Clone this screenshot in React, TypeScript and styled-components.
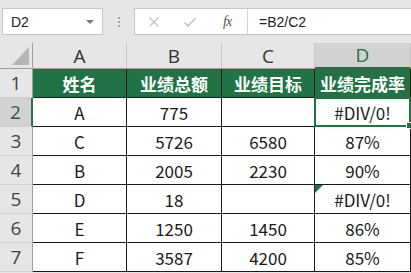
import { Fragment } from 'react';
import styled, { createGlobalStyle, css } from 'styled-components';

const GREEN = '#217346';

const GlobalStyle = createGlobalStyle`
	html, body {
		margin: 0;
		padding: 0;
		background: #fff;
		overflow: hidden;
	}
`;

const Page = styled.div`
	width: 411px;
	height: 273px;
	background: #e6e6e6;
	font-family: 'Noto Sans CJK SC', 'Noto Sans', sans-serif;
	overflow: hidden;
`;

const FormulaBar = styled.div`
	height: 43px;
	box-sizing: border-box;
	padding: 8px 0 0 2px;
	display: flex;
	align-items: flex-start;
`;

const NameBox = styled.div`
	width: 101px;
	height: 27px;
	box-sizing: border-box;
	border: 1px solid #c6c6c6;
	background: #fff;
	display: flex;
	align-items: center;
	justify-content: space-between;
	padding: 0 8px 0 8px;
	font-family: 'Liberation Sans', sans-serif;
	font-size: 14px;
	color: #222;
`;

const Caret = styled.span`
	width: 0;
	height: 0;
	border-left: 4px solid transparent;
	border-right: 4px solid transparent;
	border-top: 4px solid #777;
`;

const Grip = styled.div`
	width: 31px;
	height: 27px;
	display: flex;
	flex-direction: column;
	align-items: center;
	justify-content: center;
	gap: 2px;

	& span {
		width: 2px;
		height: 2px;
		background: #aaa;
	}
`;

const FormulaBox = styled.div`
	flex: 1;
	height: 27px;
	box-sizing: border-box;
	border: 1px solid #c6c6c6;
	border-right: none;
	background: #fff;
	display: flex;
	align-items: center;
`;

const IconZone = styled.div`
	width: 112px;
	height: 100%;
	display: flex;
	align-items: center;
	padding-left: 13px;
	box-sizing: border-box;
	gap: 23px;
`;

const Fx = styled.span`
	font-family: 'Liberation Serif', serif;
	font-style: italic;
	font-size: 14px;
	color: #555;
	margin-left: 3px;
	letter-spacing: -1px;
`;

const FormulaText = styled.div`
	height: 100%;
	border-left: 1px solid #d4d4d4;
	display: flex;
	align-items: center;
	padding-left: 11px;
	font-family: 'Liberation Sans', sans-serif;
	font-size: 14px;
	color: #222;
	flex: 1;
`;

const Sheet = styled.div`
	display: grid;
	grid-template-columns: 33px 94px 95px 93px 96px;
	grid-template-rows: 26px repeat(7, 29px);
`;

const Corner = styled.div`
	border-right: 1px solid #9e9e9e;
	border-bottom: 1px solid #9e9e9e;
	box-sizing: border-box;
	display: flex;
	align-items: flex-end;
	justify-content: flex-end;
	padding: 0 3px 3px 0;

	&::after {
		content: '';
		width: 17px;
		height: 18px;
		background: #b5b5b5;
		clip-path: polygon(100% 0, 100% 100%, 0 100%);
	}
`;

const ColHead = styled.div<{ $active?: boolean }>`
	box-sizing: border-box;
	border-right: 1px solid #c6c6c6;
	border-bottom: 1px solid #9e9e9e;
	display: flex;
	align-items: flex-end;
	justify-content: center;
	font-family: 'Open Sans', sans-serif;
	font-size: 19px;
	line-height: 24px;
	color: #333;
	${({ $active }) =>
		$active &&
		css`
			background: #d2d2d2;
			border-bottom: 2px solid ${GREEN};
			color: ${GREEN};
		`}
`;

const RowHead = styled.div<{ $active?: boolean }>`
	box-sizing: border-box;
	border-right: 1px solid #9e9e9e;
	border-bottom: 1px solid #d0d0d0;
	display: flex;
	align-items: flex-end;
	justify-content: center;
	font-family: 'Open Sans', sans-serif;
	font-size: 19px;
	line-height: 27px;
	color: #444;
	${({ $active }) =>
		$active &&
		css`
			background: #d2d2d2;
			border-right: 2px solid ${GREEN};
			color: #2f5b45;
		`}
`;

const Cell = styled.div<{ $head?: boolean; $selected?: boolean; $flag?: boolean }>`
	position: relative;
	box-sizing: border-box;
	background: #fff;
	border-right: 1px solid #1a1a1a;
	border-bottom: 1px solid #1a1a1a;
	display: flex;
	align-items: center;
	justify-content: center;
	font-size: 17px;
	color: #1a1a1a;
	padding-top: 1px;

	${({ $head }) =>
		$head &&
		css`
			background: ${GREEN};
			color: #fff;
			font-weight: 700;
		`}

	${({ $selected }) =>
		$selected &&
		css`
			&::after {
				content: '';
				position: absolute;
				left: -1px;
				top: -1px;
				right: -1px;
				bottom: -1px;
				border: 2px solid ${GREEN};
			}
			&::before {
				content: '';
				position: absolute;
				right: -3px;
				bottom: -3px;
				width: 5px;
				height: 5px;
				background: ${GREEN};
				border: 1px solid #fff;
				z-index: 2;
			}
		`}

	${({ $flag }) =>
		$flag &&
		css`
			&::before {
				content: '';
				position: absolute;
				left: 0;
				top: 0;
				border-top: 8px solid ${GREEN};
				border-right: 8px solid transparent;
			}
		`}
`;

const columns = ['A', 'B', 'C', 'D'];

const rows = [
	['姓名', '业绩总额', '业绩目标', '业绩完成率'],
	['A', '775', '', '#DIV/0!'],
	['C', '5726', '6580', '87%'],
	['B', '2005', '2230', '90%'],
	['D', '18', '', '#DIV/0!'],
	['E', '1250', '1450', '86%'],
	['F', '3587', '4200', '85%'],
];

const CrossIcon = () => (
	<svg width="12" height="12" viewBox="0 0 12 12">
		<path d="M1.5 1.5 L10.5 10.5 M10.5 1.5 L1.5 10.5" stroke="#c4c4c4" strokeWidth="1.4" fill="none" />
	</svg>
);

const CheckIcon = () => (
	<svg width="14" height="12" viewBox="0 0 14 12">
		<path d="M1.5 6.5 L5 10 L12.5 2" stroke="#c4c4c4" strokeWidth="1.6" fill="none" />
	</svg>
);

export default function App() {
	return (
		<Page>
			<GlobalStyle />
			<FormulaBar>
				<NameBox>
					D2
					<Caret />
				</NameBox>
				<Grip>
					<span />
					<span />
					<span />
				</Grip>
				<FormulaBox>
					<IconZone>
						<CrossIcon />
						<CheckIcon />
						<Fx>fx</Fx>
					</IconZone>
					<FormulaText>=B2/C2</FormulaText>
				</FormulaBox>
			</FormulaBar>
			<Sheet>
				<Corner />
				{columns.map((c) => (
					<ColHead key={c} $active={c === 'D'}>
						{c}
					</ColHead>
				))}
				{rows.map((row, r) => (
					<Fragment key={r}>
						<RowHead $active={r === 1}>{r + 1}</RowHead>
						{row.map((value, c) => (
							<Cell
								key={c}
								$head={r === 0}
								$selected={r === 1 && c === 3}
								$flag={r === 4 && c === 3}
							>
								{value}
							</Cell>
						))}
					</Fragment>
				))}
			</Sheet>
		</Page>
	);
}
